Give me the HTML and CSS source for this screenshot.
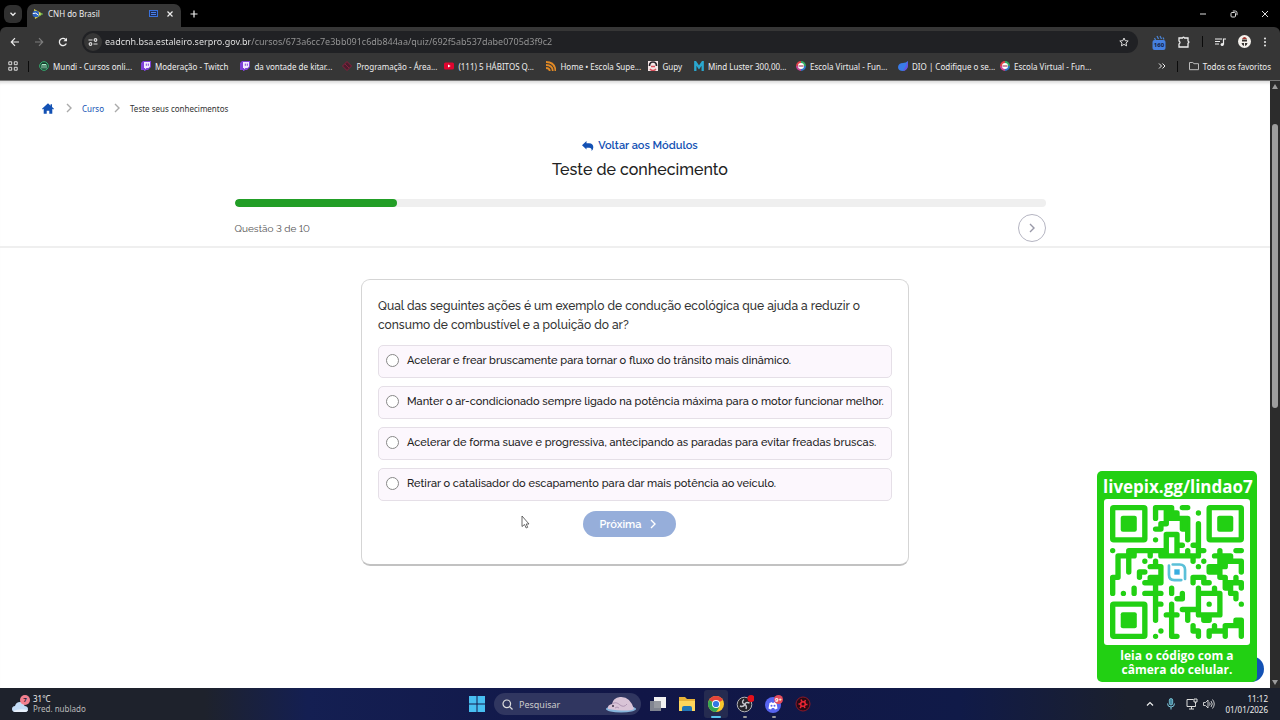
FILE: index.html
```
<!DOCTYPE html>
<html lang="pt-BR">
<head>
    <meta charset="UTF-8">
    <meta name="viewport" content="width=device-width, initial-scale=1.0">
    <title>CNH do Brasil</title>
    <link rel="stylesheet" href="styles.css">
</head>
<body>
    <svg class="defs" aria-hidden="true">
        <symbol id="twitch" viewBox="0 0 10 10">
            <path d="M2 0h8v6L7 9H5L4 10H3V9H0V2z" fill="#7d3fd6"/>
            <path d="M3 1h6v4.500L7.500 7H5.500L4 8.200V7H3z" fill="#f3eaff"/>
            <path d="M5.300 2.600v2.200M7.300 2.600v2.200" stroke="#7d3fd6"/>
        </symbol>
        <symbol id="escola" viewBox="0 0 10 10">
            <circle cx="5" cy="5" r="3.900" fill="#fff"/>
            <g fill="none" stroke-width="2">
                <path d="M5 1a4 4 0 0 1 4 4" stroke="#35a862"/>
                <path d="M9 5a4 4 0 0 1-4 4" stroke="#2e77c9"/>
                <path d="M5 9a4 4 0 0 1-4-4" stroke="#c94596"/>
                <path d="M1 5a4 4 0 0 1 4-4" stroke="#df4049"/>
            </g>
            <path d="M2.500 5h5" stroke="#a9435d" stroke-width="1.200"/>
        </symbol>
        <symbol id="chevron" viewBox="0 0 8 10">
            <path d="M2 1l4 4-4 4" fill="none" stroke="currentColor" stroke-width="1.400"/>
        </symbol>
    </svg>

    <div class="browser">
        <header class="tab-strip">
            <button class="tab-search" aria-label="Pesquisar guias">
                <svg width="8" height="8" viewBox="0 0 8 8"><path d="M1.500 2.800L4 5.300l2.500-2.500" fill="none" stroke="#eee" stroke-width="1.300"/></svg>
            </button>
            <div class="tab">
                <svg width="11" height="10" viewBox="0 0 11 10">
                    <path d="M2 0l9 5-8 5z" fill="#e4dc45"/>
                    <path d="M8 3.500l3 1.500-5 3z" fill="#3b9a55"/>
                    <path d="M5.500 2.500l4 2.500-4 2.500z" fill="#f4e34b"/>
                    <circle cx="3.800" cy="5" r="3.300" fill="#2d63bd"/>
                    <path d="M.8 4.500q3-1.500 5.800 1.700" stroke="#fff" fill="none"/>
                </svg>
                <span class="tab-title">CNH do Brasil</span>
                <svg width="9" height="7" viewBox="0 0 9 7"><rect x=".5" y=".5" width="8" height="6" fill="#202e55" stroke="#3972de"/><path d="M2 2.500h5M2 4.500h5" stroke="#4b80e8"/></svg>
                <button class="icon-btn" aria-label="Fechar guia">
                    <svg width="6" height="6" viewBox="0 0 6 6"><path d="M.5.5l5 5m0-5l-5 5" stroke="#eee" stroke-width="1.200"/></svg>
                </button>
            </div>
            <button class="icon-btn new-tab" aria-label="Nova guia">
                <svg width="8" height="8" viewBox="0 0 8 8"><path d="M4 .5v7M.5 4h7" stroke="#eee" stroke-width="1.200"/></svg>
            </button>
            <div class="window-buttons">
                <button class="icon-btn" aria-label="Minimizar"><svg width="8" height="8" viewBox="0 0 8 8"><path d="M1 4h6" stroke="#ddd"/></svg></button>
                <button class="icon-btn" aria-label="Restaurar"><svg width="8" height="8" viewBox="0 0 8 8"><g fill="none" stroke="#ddd"><rect x="1" y="2.500" width="4.500" height="4.500" rx="1"/><path d="M2.800 1h2.500Q7 1 7 2.700v2.500"/></g></svg></button>
                <button class="icon-btn" aria-label="Fechar"><svg width="8" height="8" viewBox="0 0 8 8"><path d="M1 1l6 6m0-6L1 7" stroke="#ddd"/></svg></button>
            </div>
        </header>

        <div class="toolbar">
            <button class="icon-btn" aria-label="Voltar"><svg width="10" height="10" viewBox="0 0 10 10"><path d="M9 5H1.500M5 1.200L1.300 5 5 8.800" fill="none" stroke="#eee" stroke-width="1.200"/></svg></button>
            <button class="icon-btn" aria-label="Avançar"><svg width="10" height="10" viewBox="0 0 10 10"><path d="M1 5h7.500M5 1.200L8.700 5 5 8.800" fill="none" stroke="#7d7d7d" stroke-width="1.200"/></svg></button>
            <button class="icon-btn" aria-label="Recarregar"><svg width="10" height="10" viewBox="0 0 10 10"><path d="M8.300 6.500A3.600 3.600 0 1 1 7.600 2.500" fill="none" stroke="#eee" stroke-width="1.300"/><path d="M9 .7V4.300H5.400z" fill="#eee"/></svg></button>
            <div class="address-bar">
                <button class="site-info" aria-label="Informações do site">
                    <svg width="10" height="10" viewBox="0 0 10 10"><g fill="none" stroke="#ddd" stroke-width="1.200"><path d="M.5 3h4M5.500 7h4"/><circle cx="7.500" cy="3" r="1.300"/><circle cx="2.500" cy="7" r="1.300"/></g></svg>
                </button>
                <input class="url" type="text" aria-label="Endereço" value="eadcnh.bsa.estaleiro.serpro.gov.br/cursos/673a6cc7e3bb091c6db844aa/quiz/692f5ab537dabe0705d3f9c2">
                <button class="icon-btn" aria-label="Adicionar aos favoritos"><svg width="10" height="10" viewBox="0 0 10 10"><path d="M5 1l1.200 2.700 3 .3-2.200 2 .6 2.900L5 7.400 2.400 8.900 3 6 .8 4l3-.3z" fill="none" stroke="#ddd"/></svg></button>
            </div>
            <div class="extensions">
                <button class="icon-btn" aria-label="Claquete">
                    <svg width="14" height="16" viewBox="0 0 14 16"><path d="M2.500 4l1 2m1.500-4l1.500 3M8 2l1.500 3M11 3.500l1 2" stroke="#4a85d7" stroke-width="1.200"/><rect x=".5" y="6" width="13" height="10" rx="2" fill="#4680e0"/><text class="badge-text" x="7" y="13" text-anchor="middle">160</text></svg>
                </button>
                <button class="icon-btn" aria-label="Extensões"><svg width="12" height="12" viewBox="0 0 12 12"><path d="M1 2h3.500Q5.500.300 6.500 2H10v3q1.800 1 0 2.300V11H1V8q2-1.300 0-3z" fill="none" stroke="#eee" stroke-width="1.300"/></svg></button>
                <span class="divider"></span>
                <button class="icon-btn" aria-label="Mídia"><svg width="11" height="10" viewBox="0 0 11 10"><path d="M0 2h7M0 4.500h5M0 7h4M8.500 7.500V2H11" fill="none" stroke="#eee" stroke-width="1.200"/><circle cx="7.200" cy="7.500" r="1.600" fill="#eee"/></svg></button>
                <button class="icon-btn" aria-label="Perfil"><svg width="13" height="13" viewBox="0 0 13 13"><circle cx="6.500" cy="6.500" r="6.500" fill="#f4f1ec"/><path d="M4 4q2.500-4 5 0z" fill="#a3372f"/><rect x="4" y="4.500" width="5" height="2" fill="#36322f"/><path d="M3.500 8h2.500v3q-2-.500-2.500-3zM7 8h2.500q-.3 2.500-2.500 3z" fill="#36322f"/></svg></button>
                <button class="icon-btn" aria-label="Menu"><svg width="4" height="10" viewBox="0 0 4 10"><g fill="#eee"><circle cx="2" cy="1.500" r="1"/><circle cx="2" cy="5" r="1"/><circle cx="2" cy="8.500" r="1"/></g></svg></button>
            </div>
        </div>

        <nav class="bookmarks" aria-label="Favoritos">
            <button class="icon-btn" aria-label="Apps"><svg width="10" height="10" viewBox="0 0 10 10"><path d="M.8.8h2.900v2.900H.8zM6.300.8h2.900v2.900H6.300zM.8 6.300h2.900v2.900H.8zM6.300 6.300h2.900v2.900H6.300z" fill="none" stroke="#ddd"/></svg></button>
            <span class="divider"></span>
            <a href="#" class="bookmark"><svg viewBox="0 0 10 10"><circle cx="5" cy="5" r="4.300" fill="#173b2c" stroke="#35b576"/><path d="M3 7.500V3.500h4v4M5 3.500v4" fill="none" stroke="#a8f0ca"/></svg><span class="long">Mundi - Cursos onli...</span></a>
            <a href="#" class="bookmark"><svg><use href="#twitch"/></svg><span>Moderação - Twitch</span></a>
            <a href="#" class="bookmark"><svg><use href="#twitch"/></svg><span class="long">da vontade de kitar...</span></a>
            <a href="#" class="bookmark"><svg viewBox="0 0 10 10"><path d="M5 .5L9.500 5 5 9.500.5 5zM3 3l4 4" fill="#4a1c2c" stroke="#87213f"/></svg><span class="long">Programação - Área...</span></a>
            <a href="#" class="bookmark"><svg viewBox="0 0 10 10"><rect y="1.500" width="10" height="7" rx="1.500" fill="#e0052f"/><path d="M4 3.500v3L6.700 5z" fill="#fff"/></svg><span class="long">(111) 5 HÁBITOS Q...</span></a>
            <a href="#" class="bookmark"><svg viewBox="0 0 10 10"><path d="M0 1q9 0 9.500 9M0 4q6.500 0 6.800 6M0 7q3.500 0 3.800 3" fill="none" stroke="#e08925" stroke-width="1.800"/></svg><span class="long">Home • Escola Supe...</span></a>
            <a href="#" class="bookmark"><svg viewBox="0 0 10 10"><path d="M0 0h10v10H0z" fill="#f5e6e6"/><path d="M1.500 5q0-4 3.500-4t3.500 4" fill="none" stroke="#29242b" stroke-width="1.700"/><path d="M2 8q3 3 6 0M3 5.500h4" fill="none" stroke="#d84d59" stroke-width="1.500"/></svg><span>Gupy</span></a>
            <a href="#" class="bookmark"><svg viewBox="0 0 10 10"><path d="M1.300 10V1L5 6.500 8.700 1v9" fill="none" stroke="#2aa7cf" stroke-width="2.300"/></svg><span class="long">Mind Luster 300,00...</span></a>
            <a href="#" class="bookmark"><svg><use href="#escola"/></svg><span class="long">Escola Virtual - Fun...</span></a>
            <a href="#" class="bookmark"><svg viewBox="0 0 10 10"><path d="M10 0q1 9-5 10Q0 10 0 6q.5-4 5-4 3 0 5-2z" fill="#397be8"/><path d="M10 0q1 9-5 10 3-4 5-10z" fill="#6952df"/></svg><span class="long">DIO | Codifique o se...</span></a>
            <a href="#" class="bookmark"><svg><use href="#escola"/></svg><span class="long">Escola Virtual - Fun...</span></a>
            <div class="bookmarks-end">
                <button class="icon-btn" aria-label="Mais favoritos"><svg width="8" height="8" viewBox="0 0 8 8"><path d="M1 1.500L3.500 4 1 6.500M4.500 1.500L7 4 4.500 6.500" fill="none" stroke="#eee"/></svg></button>
                <span class="divider"></span>
                <a href="#" class="bookmark"><svg viewBox="0 0 10 10"><path d="M.5 1.500h3.300L5 2.700h4.500v6h-9z" fill="none" stroke="#bbb"/></svg><span>Todos os favoritos</span></a>
            </div>
        </nav>

        <div class="viewport">
            <main class="page">
                <section class="quiz-header">
                    <nav class="breadcrumb" aria-label="Trilha">
                        <a href="#" class="home" aria-label="Início"><svg width="12" height="11" viewBox="0 0 14 12"><path d="M7 0L0 6.200l1 1L2 6.400V12h3.500V8.500h3V12H12V6.400l1 .8 1-1-2.300-2V1H10v1.700z" fill="#1351b4"/></svg></a>
                        <svg class="sep"><use href="#chevron"/></svg>
                        <a href="#">Curso</a>
                        <svg class="sep"><use href="#chevron"/></svg>
                        <span>Teste seus conhecimentos</span>
                    </nav>
                    <a href="#" class="back-link">
                        <svg width="12" height="10" viewBox="0 0 12 10"><path d="M4.500 0v2.300H7Q11.500 2.500 11.300 6.500q0 2-1.800 3.500.8-3-2.500-3.300H4.500V8.500L0 4.300z" fill="#1351b4"/></svg>
                        Voltar aos Módulos
                    </a>
                    <h1>Teste de conhecimento</h1>
                    <div class="progress-area">
                        <div class="progress" role="progressbar" aria-label="Progresso" aria-valuemin="0" aria-valuemax="10" aria-valuenow="2">
                            <div class="progress-fill" style="width: 20%"></div>
                        </div>
                        <div class="progress-info">
                            <span>Questão 3 de 10</span>
                            <button class="round-btn" aria-label="Próxima questão"><svg width="8" height="10"><use href="#chevron"/></svg></button>
                        </div>
                    </div>
                </section>

                <form class="question-card">
                    <fieldset>
                        <legend>Qual das seguintes ações é um exemplo de condução ecológica que ajuda a reduzir o consumo de combustível e a poluição do ar?</legend>
                        <label class="option"><input type="radio" name="resposta" value="a"> Acelerar e frear bruscamente para tornar o fluxo do trânsito mais dinâmico.</label>
                        <label class="option"><input type="radio" name="resposta" value="b"> Manter o ar-condicionado sempre ligado na potência máxima para o motor funcionar melhor.</label>
                        <label class="option"><input type="radio" name="resposta" value="c"> Acelerar de forma suave e progressiva, antecipando as paradas para evitar freadas bruscas.</label>
                        <label class="option"><input type="radio" name="resposta" value="d"> Retirar o catalisador do escapamento para dar mais potência ao veículo.</label>
                    </fieldset>
                    <button type="button" class="next-btn">Próxima <svg width="8" height="10"><use href="#chevron"/></svg></button>
                </form>
            </main>

            <div class="scrollbar">
                <svg width="6" height="5" viewBox="0 0 6 5"><path d="M3 0l3 5H0z" fill="#9b9b9b"/></svg>
                <div class="scroll-track"><div class="scroll-thumb"></div></div>
                <svg width="6" height="5" viewBox="0 0 6 5"><path d="M3 5l3-5H0z" fill="#9b9b9b"/></svg>
            </div>

            <span class="help-bubble"></span>
            <aside class="livepix">
                <strong>livepix.gg/lindao7</strong>
                <div class="qr-box">
                    <svg class="qr" viewBox="0 0 25 25" role="img" aria-label="QR code">
                        <g class="qr-eyes">
                            <rect x=".5" y=".5" width="6" height="6" rx=".2"/>
                            <rect x="18.500" y=".5" width="6" height="6" rx=".2"/>
                            <rect x=".5" y="18.500" width="6" height="6" rx=".2"/>
                        </g>
                        <g class="qr-pupils">
                            <rect x="2" y="2" width="3" height="3" rx=".4"/>
                            <rect x="20" y="2" width="3" height="3" rx=".4"/>
                            <rect x="2" y="20" width="3" height="3" rx=".4"/>
                        </g>
                        <path id="qrModules" class="qr-modules"/>
                        <path id="qrBlocks" class="qr-pupils"/>
                        <g fill="none" stroke="#5bc0d8" stroke-width=".5" stroke-linecap="round">
                            <path d="M11.700 11.100h1.300q1 0 1 1v1.700M13.300 14H12q-1 0-1-1v-1.700"/>
                        </g>
                        <rect x="12" y="12" width="1" height="1" fill="#38aee0"/>
                    </svg>
                </div>
                <strong class="livepix-note">leia o código com a<br>câmera do celular.</strong>
            </aside>

            <svg class="cursor" width="9" height="14" viewBox="0 0 9 14"><path d="M1 1v10.500l2.500-2 1.700 3.500 1.500-.7-1.500-3.300H8z" fill="#fff" stroke="#444" stroke-width=".8"/></svg>
        </div>
    </div>

    <footer class="taskbar">
        <button class="weather">
            <svg width="20" height="20" viewBox="0 0 20 20"><path d="M4 18q-3-.3-3-3t3-3q1-4 5-4 4 .3 4.500 4 3.500.3 3.500 3t-3 3z" fill="#c4dcf7"/><path d="M2 17q7-3 15-1-.5 2-3 2H4z" fill="#e9f1fc"/><circle cx="14" cy="6" r="5" fill="#f2808f"/><text class="badge-text" x="14" y="8" text-anchor="middle">7</text></svg>
            <span>31°C<br><small>Pred. nublado</small></span>
        </button>
        <div class="apps">
            <button class="app" aria-label="Iniciar"><svg width="16" height="16" viewBox="0 0 16 16"><path d="M0 0h7.500v7.500H0zM8.500 0H16v7.500H8.500zM0 8.500h7.500V16H0zM8.500 8.500H16V16H8.500z" fill="#48bff2"/></svg></button>
            <div class="search">
                <svg width="11" height="11" viewBox="0 0 11 11"><circle cx="4.800" cy="4.800" r="3.800" fill="none" stroke="#ddd" stroke-width="1.200"/><path d="M7.600 7.600L10.500 10.500" stroke="#ddd" stroke-width="1.200"/></svg>
                <input type="text" placeholder="Pesquisar" aria-label="Pesquisar">
                <svg width="32" height="17" viewBox="0 0 32 17"><ellipse cx="16" cy="13" rx="15" ry="3.500" fill="#86b5dc"/><path d="M3 13Q2 9 7 8q1-6 8-7 10-1 14 12-5 3-26 0z" fill="#d9c4d7"/><path d="M7 8q4-3 8 1 4 3 7-1M10 12q2-2 4 0" fill="none" stroke="#b096b4"/><circle cx="8" cy="10" r="1" fill="#3b3045"/></svg>
            </div>
            <button class="app" aria-label="Visão de tarefas"><svg width="16" height="16" viewBox="0 0 16 16"><path d="M4 1h12v11H4z" fill="#f1f1f1"/><path d="M0 5h11v10H0z" fill="#8d9098" opacity=".9"/></svg></button>
            <button class="app" aria-label="Explorador"><svg width="16" height="16" viewBox="0 0 16 16"><path d="M0 1h6l2 2h8v12H0z" fill="#e8b339"/><path d="M0 5h16v10H0z" fill="#ffd65c"/><path d="M3 15v-3q0-2 2-2h6q2 0 2 2v3z" fill="#2276b7"/></svg></button>
            <button class="app active" aria-label="Chrome"><svg width="18" height="18" viewBox="0 0 18 18"><circle cx="9" cy="9" r="8" fill="#f9c72c"/><path d="M9 9L2.100 5A8 8 0 0 1 15.900 5z" fill="#e5453b"/><path d="M9 9l-6.900-4A8 8 0 0 0 9 17l3-4z" fill="#33a755"/><circle cx="9" cy="9" r="4" fill="#fff"/><circle cx="9" cy="9" r="3.100" fill="#3478e5"/></svg></button>
            <button class="app open" aria-label="OBS"><svg width="18" height="18" viewBox="0 0 18 18"><circle cx="8.500" cy="9.500" r="7.300" fill="#25242b" stroke="#b5b5b9"/><path d="M8 4.500Q5 7 8 9q3.500 1.500 2 5M13.500 8q-4-1.500-4.500 1.500-2 3-5 1.500" fill="none" stroke="#c7c7cc" stroke-width="1.400"/><circle cx="15" cy="3.500" r="3.500" fill="#e4101c"/></svg></button>
            <button class="app open" aria-label="Discord"><svg width="18" height="18" viewBox="0 0 18 18"><circle cx="8" cy="10" r="8" fill="#5764ef"/><path d="M3.500 13.500L4.500 8 7 7l.5 1h1L9 7l2.500 1 1 5.500-2.500 1-1-1.500H7l-1 1.500z" fill="#fff"/><circle cx="6.500" cy="10.700" r="1" fill="#5764ef"/><circle cx="9.500" cy="10.700" r="1" fill="#5764ef"/><circle cx="13.500" cy="4.500" r="4.500" fill="#e44c5c"/><text class="badge-text light" x="13.500" y="7" text-anchor="middle">9+</text></svg></button>
            <button class="app" aria-label="Gravador"><svg width="16" height="16" viewBox="0 0 16 16"><circle cx="8" cy="8" r="7" fill="#290a15" stroke="#8e1828"/><circle cx="8" cy="8" r="2.300" fill="none" stroke="#eb2634" stroke-width="1.500"/><path d="M6 3.500l1 2M10.500 4L9.500 6M3.500 8h2M10.500 8.500h2M5 12l1.500-2M10 12L9 10" stroke="#eb2634" stroke-width="1.500"/></svg></button>
        </div>
        <div class="tray">
            <button class="icon-btn" aria-label="Ícones ocultos"><svg width="8" height="8" viewBox="0 0 8 8"><path d="M1 5.500l3-3 3 3" fill="none" stroke="#eee" stroke-width="1.200"/></svg></button>
            <svg class="mic" width="8" height="12" viewBox="0 0 8 12"><rect x="2.300" y=".5" width="3.400" height="6.500" rx="1.700" fill="#488aa0" stroke="#7ecbe0" stroke-width=".8"/><path d="M.5 5.500q0 3.500 3.500 3.500t3.500-3.500M4 9v2.500" fill="none" stroke="#7ecbe0"/></svg>
            <svg width="12" height="12" viewBox="0 0 12 12"><path d="M7.500 1.500H1v7h8.500V6.500M3 11h5M5.500 8.500V11M8 1h3v3H8zM9.500 4v2.500" fill="none" stroke="#ddd"/></svg>
            <svg width="12" height="12" viewBox="0 0 12 12"><path d="M.5 4.500h2L5 2v8L2.500 7.500h-2zM6.500 4.500q1.300 1.500 0 3M8 3q2.500 3 0 6M9.500 1.500q3.500 4.500 0 9" fill="none" stroke="#ddd" stroke-width=".9"/></svg>
            <time datetime="2026-01-01T11:12">11:12<br>01/01/2026</time>
        </div>
    </footer>

    <script src="qr.js"></script>
</body>
</html>
```

FILE: styles.css
```
* {
    box-sizing: border-box;
}
body {
    margin: 0;
    height: 100vh;
    display: flex;
    flex-direction: column;
    overflow: hidden;
    font-family: "Noto Sans", "Open Sans", sans-serif;
    font-size: 8px;
    background: #000;
    color: #eee;
}
button, input {
    font: inherit;
    color: inherit;
    margin: 0;
    padding: 0;
    border: none;
    background: none;
}
button {
    cursor: pointer;
}
a {
    color: inherit;
    text-decoration: none;
}
svg {
    display: block;
    flex: none;
}
.defs {
    position: absolute;
    width: 0;
    height: 0;
}
.icon-btn {
    display: flex;
    align-items: center;
    justify-content: center;
    flex: none;
}
.divider {
    width: 1px;
    height: 11px;
    background: #0b0b0b;
}
.badge-text {
    font-size: 6px;
    font-weight: 700;
    fill: #14213f;
}
.badge-text.light {
    fill: #fff;
}

/* browser */
.browser {
    flex: 1;
    min-height: 0;
    display: flex;
    flex-direction: column;
}
.tab-strip {
    height: 27px;
    flex: none;
    display: flex;
    align-items: center;
    padding: 0 11px 0 4px;
}
.tab-search {
    width: 18px;
    height: 18px;
    display: flex;
    align-items: center;
    justify-content: center;
    border-radius: 6px;
    background: #303030;
}
.tab {
    align-self: flex-end;
    width: 154px;
    height: 23px;
    margin-left: 5px;
    padding: 0 8px 4px 5px;
    display: flex;
    align-items: center;
    gap: 5px;
    border-radius: 7px 7px 0 0;
    background: #363636;
}
.tab-title {
    flex: 1;
}
.tab svg + .icon-btn {
    margin-left: 4px;
}
.new-tab {
    margin-left: 9px;
}
.window-buttons {
    margin-left: auto;
    display: flex;
    gap: 23px;
}
.toolbar {
    height: 29px;
    flex: none;
    display: flex;
    align-items: center;
    gap: 14px;
    padding: 0 13px 0 10px;
    border-radius: 6px 6px 0 0;
    background: #363636;
}
.address-bar {
    flex: 1;
    height: 22px;
    display: flex;
    align-items: center;
    padding: 0 9px 0 2px;
    gap: 3px;
    border-radius: 11px;
    background: #202124;
}
.site-info {
    width: 18px;
    height: 18px;
    display: flex;
    align-items: center;
    justify-content: center;
    border-radius: 50%;
    background: #363636;
}
/* domain is bright, the rest of the path is dimmed */
.url {
    flex: 1;
    font-size: 9px;
    background: linear-gradient(90deg, #eee 145px, #999 145px);
    background-clip: text;
    -webkit-background-clip: text;
    -webkit-text-fill-color: transparent;
}
.extensions {
    display: flex;
    align-items: center;
    gap: 12px;
}
.bookmarks {
    height: 24px;
    flex: none;
    display: flex;
    align-items: center;
    gap: 12px;
    padding: 0 9px 4px 8px;
    background: #363636;
    white-space: nowrap;
}
.bookmarks > .divider {
    margin: 0 -2px;
}
.bookmark {
    display: flex;
    align-items: center;
    gap: 4px;
}
.bookmark svg {
    width: 10px;
    height: 10px;
}
.bookmark .long {
    width: 76px;
}
.bookmarks-end {
    margin-left: auto;
    display: flex;
    align-items: center;
    gap: 11px;
}

/* page */
.viewport {
    position: relative;
    flex: 1;
    min-height: 0;
    display: flex;
    background: #fff;
    border-top: 1px solid #777;
}
.page {
    flex: 1;
    font-family: Raleway, "Open Sans", sans-serif;
    font-variant-numeric: lining-nums;
    color: #333;
    box-shadow: inset 0 4px 3px -2px #ddd;
}
.quiz-header {
    display: flex;
    flex-direction: column;
    align-items: center;
    padding: 20px 0 4px 10px;
    border-bottom: 2px solid #efefef;
}
.breadcrumb {
    align-self: stretch;
    display: flex;
    align-items: center;
    gap: 9px;
    height: 14px;
    padding-left: 32px;
    font-family: "Noto Sans", sans-serif;
    font-size: 8px;
}
.home {
    margin-right: 2px;
}
.breadcrumb a,
.back-link {
    color: #1351b4;
}
.sep {
    width: 8px;
    height: 10px;
    color: #aaa;
}
.back-link {
    display: flex;
    align-items: center;
    gap: 4px;
    margin-top: 23px;
    font-size: 11px;
    line-height: 16px;
    font-weight: 600;
}
h1 {
    margin: 4px 0 0;
    font-size: 16px;
    line-height: 24px;
    font-weight: 500;
    color: #222;
}
.progress-area {
    width: 100%;
    max-width: 811px;
    margin-top: 17px;
}
.progress {
    height: 8px;
    border-radius: 4px;
    background: #efefef;
    overflow: hidden;
}
.progress-fill {
    height: 100%;
    border-radius: 4px;
    background: #229e26;
}
.progress-info {
    display: flex;
    align-items: center;
    justify-content: space-between;
    margin-top: 7px;
    font-size: 10px;
    color: #555;
}
.round-btn {
    width: 28px;
    height: 28px;
    display: flex;
    align-items: center;
    justify-content: center;
    border: 1px solid #b5b5c2;
    border-radius: 50%;
    color: #9999a8;
}
.question-card {
    width: 548px;
    margin: 31px auto 0;
    padding: 17px 16px 27px;
    display: flex;
    flex-direction: column;
    align-items: center;
    border: 1px solid #d5d5d5;
    border-bottom: 2px solid #c2c2c2;
    border-radius: 9px;
}
fieldset {
    align-self: stretch;
    margin: 0;
    padding: 0;
    border: none;
    min-width: 0;
}
legend {
    padding: 0;
    margin-bottom: 10px;
    font-size: 12px;
    line-height: 19px;
    font-weight: 500;
}
.option {
    display: flex;
    align-items: center;
    gap: 8px;
    height: 33px;
    margin-bottom: 8px;
    padding: 0 7px 2px;
    border: 1px solid #e5dfe7;
    border-radius: 5px;
    background: #fcf7fd;
    font-size: 11px;
    font-weight: 500;
    white-space: nowrap;
    color: #222;
}
.option input {
    appearance: none;
    width: 13px;
    height: 13px;
    flex: none;
    border: 1px solid #888;
    border-radius: 50%;
    background: #fff;
}
.option input:checked {
    border: 4px solid #1351b4;
}
.next-btn {
    display: flex;
    align-items: center;
    gap: 7px;
    height: 26px;
    margin: 2px 11px 0 0;
    padding: 0 19px 0 16px;
    border-radius: 13px;
    background: #96aeda;
    color: #fff;
    font-size: 11px;
    font-weight: 600;
}
.scrollbar {
    width: 10px;
    flex: none;
    display: flex;
    flex-direction: column;
    align-items: center;
    padding: 3px 0;
    background: #2c2c2c;
}
.scroll-track {
    flex: 1;
    padding-top: 35px;
}
.scroll-thumb {
    width: 6px;
    height: 284px;
    border-radius: 3px;
    background: #9d9d9d;
}

/* stream overlay */
.help-bubble {
    position: absolute;
    right: 16px;
    bottom: 6px;
    width: 26px;
    height: 26px;
    border-radius: 50%;
    background: #1351b4;
}
.livepix {
    position: absolute;
    right: 23px;
    bottom: 6px;
    width: 160px;
    padding: 5px 6px;
    border-radius: 5px;
    background: #22d013;
    color: #fff;
    text-align: center;
    font-family: "Open Sans", sans-serif;
    font-size: 17px;
    line-height: 22px;
}
.livepix strong {
    display: block;
    white-space: nowrap;
}
.livepix .livepix-note {
    margin-top: 4px;
    font-size: 12px;
    line-height: 14px;
}
.qr-box {
    margin: 1px 1px 0;
    padding: 6px;
    border-radius: 3px;
    background: #fff;
}
.qr {
    width: 100%;
}
.qr-eyes {
    fill: none;
    stroke: #22d013;
}
.qr-pupils {
    fill: #22d013;
}
.qr-modules {
    fill: none;
    stroke: #22d013;
    stroke-linecap: round;
}
.cursor {
    position: absolute;
    left: 521px;
    top: 434px;
}

/* taskbar */
.taskbar {
    height: 32px;
    flex: none;
    display: grid;
    grid-template-columns: 1fr auto 1fr;
    align-items: center;
    background: linear-gradient(90deg, #1e222c 16%, #141f52 24%, #111647 50%, #101a48 75%, #1b202d 88%);
}
.weather {
    justify-self: start;
    display: flex;
    align-items: center;
    gap: 2px;
    padding-left: 11px;
    text-align: left;
    line-height: 10px;
}
.weather small {
    font-size: 8px;
    color: #bbb;
}
.apps {
    display: flex;
    align-items: center;
    gap: 5px;
}
.app {
    position: relative;
    width: 24px;
    height: 28px;
    display: flex;
    align-items: center;
    justify-content: center;
    border-radius: 3px;
}
.app.active {
    background: #252b50;
}
.app.active::after,
.app.open::after {
    content: "";
    position: absolute;
    bottom: 0;
    width: 4px;
    height: 2px;
    border-radius: 1px;
    background: #999;
}
.app.active::after {
    width: 10px;
    background: #58c4ee;
}
.search {
    width: 147px;
    height: 22px;
    display: flex;
    align-items: center;
    gap: 6px;
    padding: 0 4px 0 8px;
    border-radius: 11px;
    background: #303660;
    font-size: 9px;
}
.search input {
    flex: 1;
    min-width: 0;
}
.search input::placeholder {
    color: #ccc;
}
.tray {
    justify-self: end;
    display: flex;
    align-items: center;
    gap: 5px;
    padding-right: 12px;
    text-align: right;
    line-height: 11px;
}
.mic {
    margin: 0 6px 0 8px;
}
.tray time {
    margin-left: 5px;
}
```

FILE: qr.js
```
const modules = [
    '........####.##..........',
    '........#.###...#........',
    '........#.#####..........',
    '.........##..##.#........',
    '........##...##.#........',
    '..........###.#.#........',
    '........#.#.#.#.#........',
    '..........#.##.##........',
    '#..########.#.#.##..#..##',
    '.####..#.########..####..',
    '.#.#..#.#......#.#..#####',
    '.#.#...###......#.####..#',
    '.#.#.##..#........###...#',
    '##...#.###.....###..##.#.',
    '#.....####.....#.##..####',
    '#...#...#..#....#..#.##.#',
    '#.#.#.####.#.#..#####.##.',
    '........#...##..#...#..#.',
    '........##.#....#.#.#...#',
    '........#..#.####...#....',
    '........#.###.#.#####....',
    '........#..#..#..##....##',
    '...........#...#...#.####',
    '.........#.#...##.####..#',
    '........#..##...#.#..#..#'
];

const on = (x, y) => modules[y] && modules[y][x] === '#';
let lines = '';
let blocks = '';

// neighbouring modules are joined so only free ends stay round
for (let y = 0; y < 25; y++) {
    for (let x = 0; x < 25; x++) {
        if (!on(x, y)) continue;
        const start = `M${x + 0.5} ${y + 0.5}`;
        lines += start + 'h0';
        if (on(x + 1, y)) lines += start + 'h1';
        if (on(x, y + 1)) lines += start + 'v1';
        if (on(x + 1, y) && on(x, y + 1) && on(x + 1, y + 1)) {
            blocks += start + 'h1v1h-1z';
        }
    }
}

document.getElementById('qrModules').setAttribute('d', lines);
document.getElementById('qrBlocks').setAttribute('d', blocks);
```
